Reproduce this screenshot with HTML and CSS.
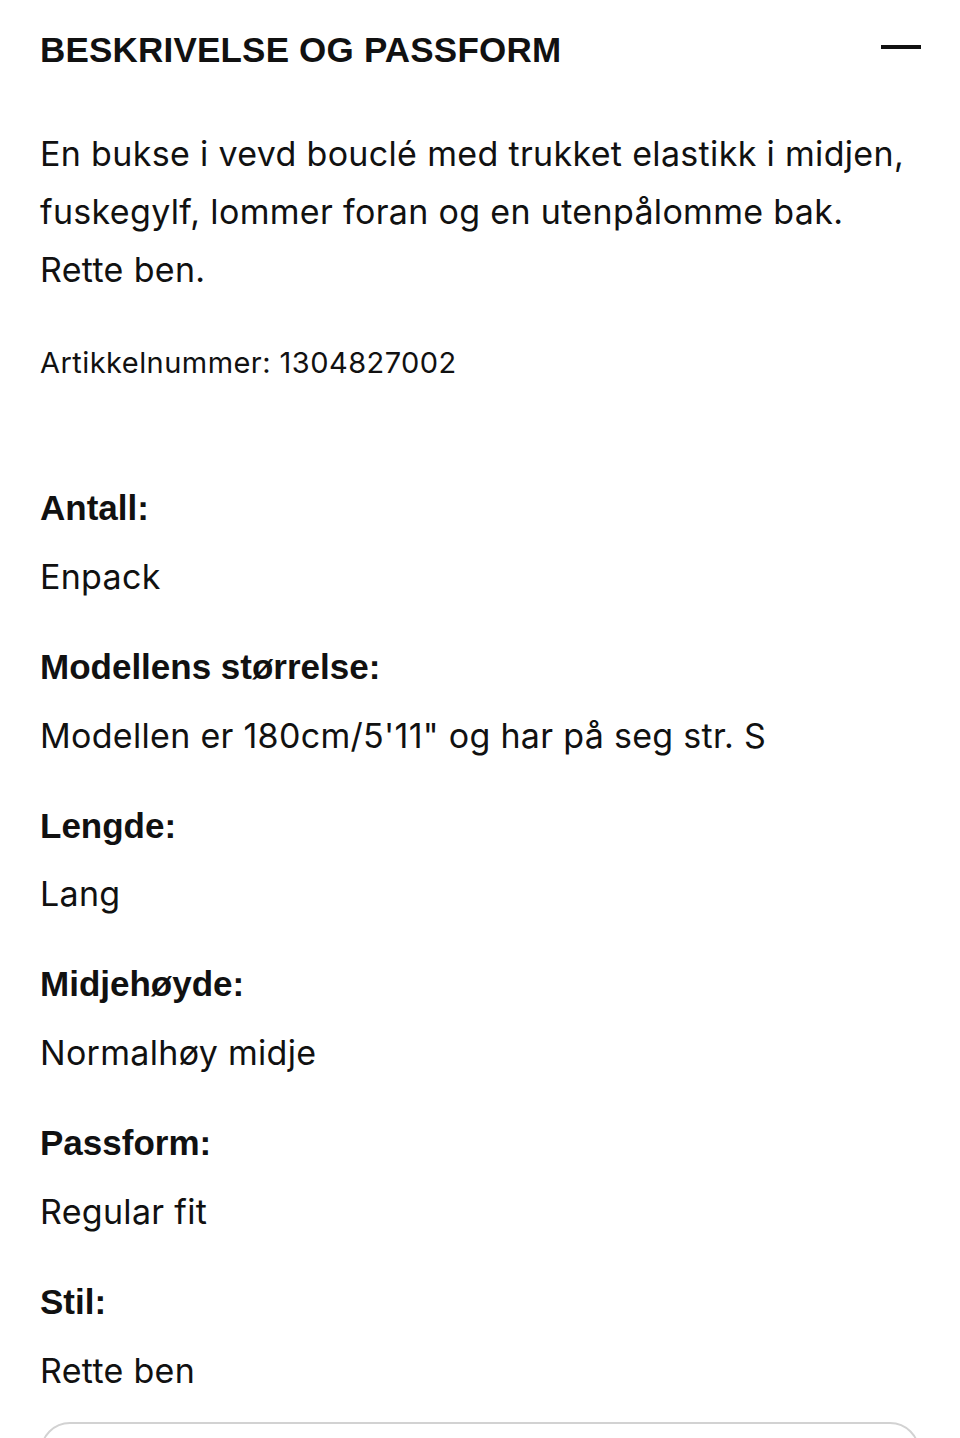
FILE: index.html
```html
<!DOCTYPE html>
<html lang="no">
<head>
<meta charset="utf-8">
<title>Beskrivelse og passform</title>
<link rel="stylesheet" href="styles.css">
</head>
<body>
<section class="accordion">
  <header class="acc-head">
    <h2 class="acc-title">BESKRIVELSE OG PASSFORM</h2>
    <span class="acc-toggle" aria-hidden="true"></span>
  </header>
  <div class="acc-body">
    <p class="desc">En bukse i vevd bouclé med trukket elastikk i midjen, fuskegylf, lommer foran og en utenpålomme bak. Rette ben.</p>
    <p class="article">Artikkelnummer: 1304827002</p>
    <dl class="attrs">
      <div class="attr"><dt>Antall:</dt><dd>Enpack</dd></div>
      <div class="attr"><dt>Modellens størrelse:</dt><dd>Modellen er 180cm/5'11" og har på seg str. S</dd></div>
      <div class="attr"><dt>Lengde:</dt><dd>Lang</dd></div>
      <div class="attr"><dt>Midjehøyde:</dt><dd>Normalhøy midje</dd></div>
      <div class="attr"><dt>Passform:</dt><dd>Regular fit</dd></div>
      <div class="attr"><dt>Stil:</dt><dd>Rette ben</dd></div>
    </dl>
    <div class="box"></div>
  </div>
</section>
</body>
</html>
```
FILE: styles.css
```css
html, body {
  margin: 0;
  padding: 0;
  background: #fff;
}
body {
  color: #111;
  font-family: Inter, "Liberation Sans", sans-serif;
}
.accordion {
  padding: 30px 39px 0 40px;
}
.acc-head {
  display: flex;
  justify-content: space-between;
  align-items: flex-start;
}
.acc-title {
  margin: 0;
  font-family: "Liberation Sans", Arial, sans-serif;
  font-weight: 700;
  font-size: 35px;
  line-height: 40px;
  letter-spacing: 0.2px;
}
.acc-toggle {
  display: block;
  width: 40px;
  height: 4px;
  margin-top: 15px;
  background: #111;
}
.acc-body {
  padding-top: 55px;
}
.desc {
  margin: 0;
  font-size: 34px;
  line-height: 58px;
  letter-spacing: 0.33px;
  max-width: 872px;
}
.article {
  margin: 43.5px 0 0;
  font-size: 29px;
  line-height: 40px;
  letter-spacing: 0.45px;
}
.attrs {
  margin: 105.5px 0 0;
  display: flex;
  flex-direction: column;
  gap: 50px;
}
.attr dt {
  font-family: "Liberation Sans", Arial, sans-serif;
  font-weight: 700;
  font-size: 35px;
  line-height: 40px;
}
.attr dd {
  margin: 28.8px 0 0;
  font-size: 34px;
  line-height: 40px;
  letter-spacing: 0.3px;
}
.box {
  margin: 31px 1px 0 0;
  height: 120px;
  border: 2px solid #d2d2d2;
  border-radius: 30px;
}
```
